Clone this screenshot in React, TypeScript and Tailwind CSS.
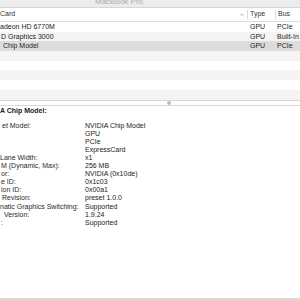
import React from "react";

const rows = [
  { name: "adeon HD 6770M", pl: "pl-0", type: "GPU", bus: "PCIe" },
  { name: "D Graphics 3000", pl: "pl-[1px]", type: "GPU", bus: "Built-In" },
  { name: "Chip Model", pl: "pl-[3px]", type: "GPU", bus: "PCIe", selected: true },
  { name: "", pl: "", type: "", bus: "" },
  { name: "", pl: "", type: "", bus: "" },
  { name: "", pl: "", type: "", bus: "" },
  { name: "", pl: "", type: "", bus: "" },
  { name: "", pl: "", type: "", bus: "" },
];

const details: { label: string; value: string; pl?: string }[] = [
  { label: "et Model:", value: "NVIDIA Chip Model", pl: "pl-[2px]" },
  { label: "", value: "GPU" },
  { label: "", value: "PCIe" },
  { label: "", value: "ExpressCard" },
  { label: "Lane Width:", value: "x1" },
  { label: "M (Dynamic, Max):", value: "256 MB", pl: "pl-[1px]" },
  { label: "or:", value: "NVIDIA (0x10de)", pl: "pl-[1px]" },
  { label: "e ID:", value: "0x1c03", pl: "pl-[1px]" },
  { label: "ion ID:", value: "0x00a1", pl: "pl-[1px]" },
  { label: "Revision:", value: "preset 1.0.0", pl: "pl-[2px]" },
  { label: "natic Graphics Switching:", value: "Supported" },
  { label: "Version:", value: "1.9.24", pl: "pl-[4px]" },
  { label: ":", value: "Supported", pl: "pl-[1px]" },
];

export default function App() {
  return (
    <div
      className="w-[300px] h-[300px] overflow-hidden bg-white flex flex-col text-[#222]"
      style={{ fontFamily: '"Liberation Sans", Arial, sans-serif' }}
    >
      {/* title bar */}
      <div className="h-[8px] shrink-0 bg-[#ececec] border-b border-[#d6d6d6] overflow-hidden">
        <div className="pl-[95px] mt-[-2px] text-[8px] leading-[8px] text-[#acacac] whitespace-nowrap">
          MacBook Pro
        </div>
      </div>

      {/* header */}
      <div className="h-[14px] shrink-0 flex items-stretch border-b border-[#dcdcdc] text-[7px] text-[#333] bg-white">
        <div className="w-[247px] flex items-center justify-between pr-[3px]">
          <span>Card</span>
          <svg width="4" height="3" viewBox="0 0 4 3" className="mb-[1px]">
            <path d="M0.5 2.5 L2 1 L3.5 2.5" stroke="#9a9a9a" strokeWidth="0.8" fill="none" />
          </svg>
        </div>
        <div className="w-[28px] flex items-center border-l border-[#dadada] my-[2px] pl-[2px]">
          Type
        </div>
        <div className="flex-1 flex items-center border-l border-[#dadada] my-[2px] pl-[2px]">
          Bus
        </div>
      </div>

      {/* list */}
      <div className="h-[77.6px] shrink-0 overflow-hidden">
        {rows.map((r, i) => (
          <div
            key={i}
            className={`h-[9.7px] flex items-center text-[7px] leading-[9.7px] whitespace-nowrap ${
              r.selected ? "bg-[#dcdcdc]" : i % 2 === 1 ? "bg-[#f4f4f4]" : "bg-white"
            }`}
          >
            <div className={`w-[247px] ${r.pl}`}>{r.name}</div>
            <div className="w-[28px] pl-[3px]">{r.type}</div>
            <div className="flex-1 pl-[2px] overflow-hidden">{r.bus}</div>
          </div>
        ))}
      </div>

      {/* splitter */}
      <div className="h-[6px] shrink-0 border-t border-[#d4d4d4] border-b border-[#d8d8d8] flex items-center justify-center bg-white">
        <div className="w-[4px] h-[4px] rounded-full bg-[#bdbdbd] ml-[38px]" />
      </div>

      {/* detail */}
      <div className="flex-1 flex flex-col text-[7px] leading-[8.1px] pt-[0px]">
        <div className="font-bold pl-0 h-[8px] leading-[8px] mt-[1px]">A Chip Model:</div>
        <div className="mt-[7px] flex flex-col">
          {details.map((d, i) => (
            <div key={i} className="flex h-[8.1px] whitespace-nowrap">
              <div className={`w-[85px] text-[#2a2a2a] ${d.pl ?? ""}`}>{d.label}</div>
              <div className="text-[#1a1a1a]">{d.value}</div>
            </div>
          ))}
        </div>
      </div>

      <div className="h-[2px] shrink-0 bg-[#dadada]" />
    </div>
  );
}
